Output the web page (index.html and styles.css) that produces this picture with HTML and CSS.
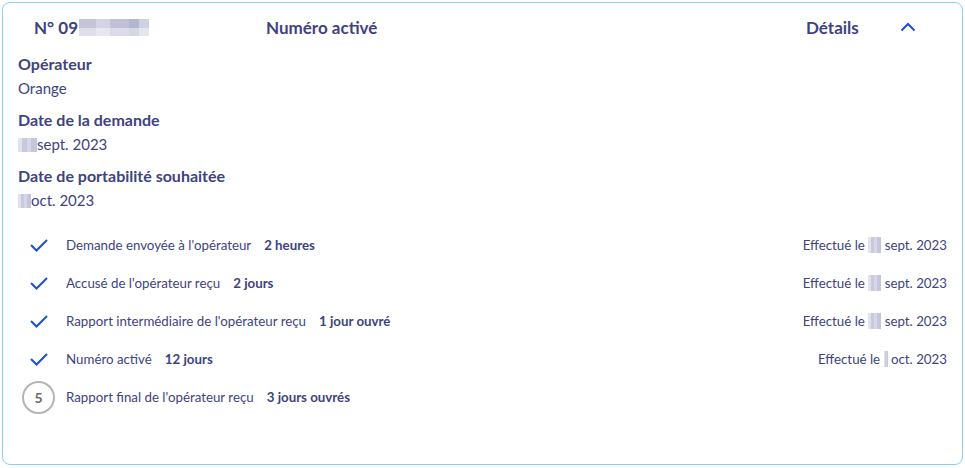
FILE: index.html
```html
<!DOCTYPE html>
<html lang="fr">
<head>
    <meta charset="UTF-8">
    <title>Portabilité</title>
    <link rel="stylesheet" href="styles.css">
</head>
<body>

    <div class="card">
        <!-- Header row -->
        <div class="card-header">
            <div class="number">N° 09<span class="blur blur-number"></span></div>
            <div class="status">Numéro activé</div>
            <div class="details">Détails</div>
            <svg class="chevron" width="16" height="10" viewBox="0 0 16 10">
                <path d="M1.5 8.5 L8 2 L14.5 8.5" fill="none" stroke="#1d4fd8" stroke-width="2"/>
            </svg>
        </div>

        <!-- Infos -->
        <div class="info">
            <div class="info-label">Opérateur</div>
            <div class="info-value">Orange</div>
            <div class="info-label">Date de la demande</div>
            <div class="info-value"><span class="blur blur-day"></span>sept. 2023</div>
            <div class="info-label">Date de portabilité souhaitée</div>
            <div class="info-value"><span class="blur blur-day small"></span>oct. 2023</div>
        </div>

        <!-- Steps -->
        <ul class="steps">
            <li class="step">
                <span class="step-icon"><svg class="check" width="20" height="16" viewBox="0 0 20 16"><path d="M2 8 L7.5 13.5 L18 3" fill="none" stroke="#1d4fd8" stroke-width="2"/></svg></span>
                <span class="step-label">Demande envoyée à l'opérateur</span>
                <span class="step-time">2 heures</span>
                <span class="step-date">Effectué le <span class="blur blur-date"></span> sept. 2023</span>
            </li>
            <li class="step">
                <span class="step-icon"><svg class="check" width="20" height="16" viewBox="0 0 20 16"><path d="M2 8 L7.5 13.5 L18 3" fill="none" stroke="#1d4fd8" stroke-width="2"/></svg></span>
                <span class="step-label">Accusé de l'opérateur reçu</span>
                <span class="step-time">2 jours</span>
                <span class="step-date">Effectué le <span class="blur blur-date"></span> sept. 2023</span>
            </li>
            <li class="step">
                <span class="step-icon"><svg class="check" width="20" height="16" viewBox="0 0 20 16"><path d="M2 8 L7.5 13.5 L18 3" fill="none" stroke="#1d4fd8" stroke-width="2"/></svg></span>
                <span class="step-label">Rapport intermédiaire de l'opérateur reçu</span>
                <span class="step-time">1 jour ouvré</span>
                <span class="step-date">Effectué le <span class="blur blur-date"></span> sept. 2023</span>
            </li>
            <li class="step">
                <span class="step-icon"><svg class="check" width="20" height="16" viewBox="0 0 20 16"><path d="M2 8 L7.5 13.5 L18 3" fill="none" stroke="#1d4fd8" stroke-width="2"/></svg></span>
                <span class="step-label">Numéro activé</span>
                <span class="step-time">12 jours</span>
                <span class="step-date">Effectué le <span class="blur blur-date thin"></span> oct. 2023</span>
            </li>
            <li class="step">
                <span class="step-icon"><span class="step-num">5</span></span>
                <span class="step-label">Rapport final de l'opérateur reçu</span>
                <span class="step-time">3 jours ouvrés</span>
            </li>
        </ul>
    </div>

</body>
</html>
```

FILE: styles.css
```css
/* General Page Styling */
body {
    font-family: Lato, "Noto Sans", sans-serif;
    background-color: #fff;
    color: #3e4380;
    margin: 0;
    padding: 2px;
}

.card {
    height: 463px;
    border: 1px solid #80d3f7;
    border-radius: 8px;
    box-sizing: border-box;
    padding: 0 15px;
}

/* Header */
.card-header {
    display: flex;
    align-items: center;
    height: 48px;
    font-size: 17px;
    font-weight: bold;
}

.number {
    width: 232px;
    padding-left: 16px;
    display: flex;
    align-items: center;
}

.status {
    flex: 1;
}

.details {
    width: 94px;
}

.chevron {
    margin-right: 31px;
}

/* Blurred values */
.blur {
    display: inline-block;
    background:
        linear-gradient(90deg, #e2e2ee 0 20%, #c9c9dc 20% 45%, #d6d6e6 45% 70%, #c4c6dc 70% 100%);
}

.blur-number {
    width: 70px;
    height: 17px;
    margin-left: 1px;
    background:
        linear-gradient(180deg, transparent 0 55%, rgba(255, 255, 255, 0.45) 55% 100%),
        linear-gradient(90deg, #c5c5da 0 25%, #d3d3e3 25% 45%, #c0c0d6 45% 72%, #b3b6cf 72% 86%, #cfd0e1 86% 100%);
}

.blur-day {
    width: 19px;
    height: 14px;
    vertical-align: -2px;
}

.blur-day.small {
    width: 13px;
}

.blur-date {
    width: 13px;
    height: 16px;
    vertical-align: -3px;
}

.blur-date.thin {
    width: 4px;
}

/* Infos */
.info-label {
    font-weight: bold;
    font-size: 16px;
    margin-top: 8px;
    line-height: 24px;
}

.info-label:first-child {
    margin-top: 1px;
}

.info-value {
    font-size: 15px;
    line-height: 24px;
}

/* Steps */
.steps {
    list-style: none;
    margin: 14px 0 0;
    padding: 0;
}

.step {
    display: flex;
    align-items: center;
    height: 38px;
    font-size: 13.3px;
}

.step-icon {
    width: 48px;
    display: flex;
    padding-left: 4px;
    box-sizing: border-box;
}

.check {
    margin-left: 7px;
}

.step-num {
    width: 33px;
    height: 33px;
    border: 2px solid #b4b4b4;
    border-radius: 50%;
    box-sizing: border-box;
    display: flex;
    align-items: center;
    justify-content: center;
    color: #6a6a6a;
    font-weight: bold;
    font-size: 14px;
}

.step-time {
    font-weight: bold;
    margin-left: 13px;
}

.step-date {
    margin-left: auto;
}
```
